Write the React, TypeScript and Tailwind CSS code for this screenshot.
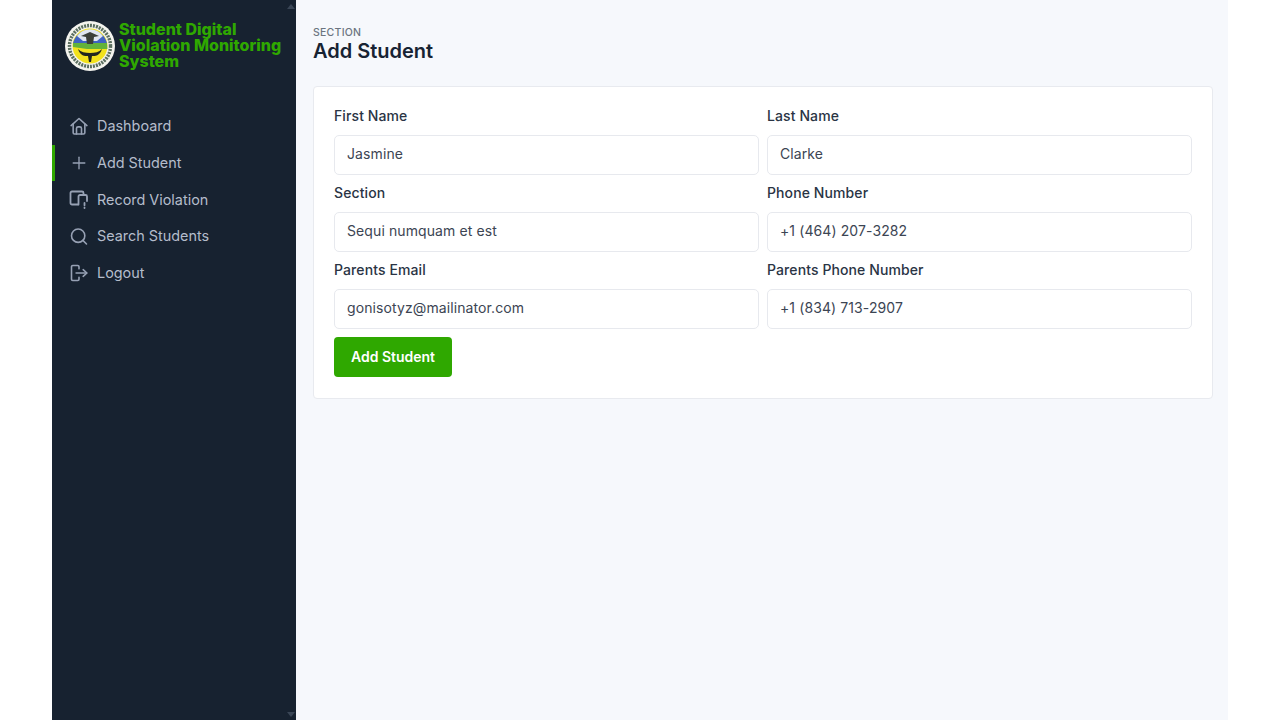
import React from 'react';
import { Plus, Search } from 'lucide-react';

const HomeIcon = () => (
    <svg width="20" height="20" viewBox="0 0 24 24" fill="none" stroke="currentColor" strokeWidth="1.9" strokeLinecap="round" strokeLinejoin="round">
        <path d="M2.5 11.5 12 3l9.5 8.5" />
        <path d="M5 9.5V20a1.5 1.5 0 0 0 1.5 1.5h11A1.5 1.5 0 0 0 19 20V9.5" />
        <path d="M9 21.5V15a2 2 0 0 1 2-2h2a2 2 0 0 1 2 2v6.5" />
    </svg>
);

const RecordIcon = () => (
    <svg width="20" height="20" viewBox="0 0 20 20" fill="none" stroke="currentColor" strokeWidth="1.8" strokeLinecap="round" strokeLinejoin="round">
        <path d="M9 15.5H3a1.5 1.5 0 0 1-1.500-1.500V4A1.500 1.500 0 0 1 3 2.500h10A1.500 1.500 0 0 1 14.500 4v2" />
        <path d="M9.500 15.500V7.500A1.500 1.500 0 0 1 11 6h5.500A1.500 1.500 0 0 1 18 7.500V12" />
        <path d="M15.500 14v2.200M15.500 18.500v.5" />
    </svg>
);

const LogoutIcon = () => (
    <svg width="20" height="20" viewBox="0 0 24 24" fill="none" stroke="currentColor" strokeWidth="1.9" strokeLinecap="round" strokeLinejoin="round">
        <path d="M12 7V4.500A1.500 1.500 0 0 0 10.500 3h-6A1.500 1.500 0 0 0 3 4.500v15A1.500 1.500 0 0 0 4.500 21h6a1.500 1.500 0 0 0 1.500-1.500V17" />
        <path d="M8.500 12H21" />
        <path d="M17 8l4.500 4-4.500 4" />
    </svg>
);

const Logo = () => (
    <svg width="50" height="50" viewBox="0 0 50 50">
        <circle cx="25" cy="25" r="25" fill="#f4f4ee" />
        <circle cx="25" cy="25" r="20.500" fill="none" stroke="#5b6f60" strokeWidth="3.500" strokeDasharray="2 1" />
        <circle cx="25" cy="25" r="17.500" fill="#f2e21c" />
        <path d="M8 22a17.500 17.500 0 0 1 34 0z" fill="#3f62c4" />
        <path d="M12 15a16 16 0 0 1 26 0l-6 5H18z" fill="#dfe6ef" />
        <path d="M8 22h34l.4 6H22L8 26z" fill="#63b23a" />
        <path d="M16 15l9-4 9 4-5 1-1 7h-6l-1-7z" fill="#3a3f38" />
        <path d="M13 28c2 7 7 7 10 7l1 6h2l1-6c3 0 8 0 10-7-3 3-7 4-12 4s-9-1-12-4z" fill="#20261f" />
    </svg>
);

const NavItem = ({ icon, label, active = false }: { icon: React.ReactNode, label: string, active?: boolean }) => (
    <div className={`flex items-center gap-2 h-[36.6px] pl-[14px] text-[#b4bccb] text-[14.4px] border-l-[3px] ${active ? 'border-[#2fa800]' : 'border-transparent'}`}>
        <span className="w-5 flex justify-center text-[#97a1b4]">{icon}</span>
        <span>{label}</span>
    </div>
);

const Field = ({ label, value }: { label: string, value: string }) => (
    <div className="flex flex-col">
        <label className="text-[14px] font-medium text-[#2a3444] leading-[20px] mb-[9px] tracking-[0.1px]">{label}</label>
        <div className="h-10 bg-white border border-[#e7e9ee] rounded-[5px] px-3 pb-[3px] flex items-center text-[14px] text-[#3c4553] tracking-[0.1px]">{value}</div>
    </div>
);

export default function App() {
    return (
        <div className="h-screen bg-white flex justify-center overflow-hidden font-['Inter',sans-serif]">
            <div className="w-[1176px] flex">
                {/* Sidebar */}
                <aside className="w-[244px] bg-[#172230] relative shrink-0">
                    <div className="flex items-center gap-[4px] pl-[13px] pt-[21px]">
                        <Logo />
                        <div className="text-[#2fa800] font-extrabold text-[16px] leading-[16px] w-[172px] -mt-[3px]">
                            Student Digital Violation Monitoring System
                        </div>
                    </div>
                    <nav className="mt-[37px]">
                        <NavItem icon={<HomeIcon />} label="Dashboard" />
                        <NavItem icon={<Plus size={24} strokeWidth={1.6} />} label="Add Student" active />
                        <NavItem icon={<RecordIcon />} label="Record Violation" />
                        <NavItem icon={<Search size={23} strokeWidth={1.9} />} label="Search Students" />
                        <NavItem icon={<LogoutIcon />} label="Logout" />
                    </nav>
                    {/* scrollbar arrows */}
                    <div className="absolute top-[4px] right-[1px] w-0 h-0 border-x-[4px] border-x-transparent border-b-[5px] border-b-[#3a4656]" />
                    <div className="absolute bottom-[3px] right-[1px] w-0 h-0 border-x-[4px] border-x-transparent border-t-[5px] border-t-[#3a4656]" />
                </aside>

                {/* Main */}
                <main className="flex-1 bg-[#f6f8fc] pl-[17px] pr-[15px] pt-[26px]">
                    <div className="text-[10.5px] font-medium text-[#6b7480] tracking-[0.25px] leading-[13px]">SECTION</div>
                    <h1 className="text-[20px] font-semibold text-[#172333] leading-[24px]">Add Student</h1>
                    <div className="mt-[23px] bg-white border border-[#e8eaef] rounded-[4px] h-[313px] px-5 pt-[19px]">
                        <div className="grid grid-cols-2 gap-x-2 gap-y-2">
                            <Field label="First Name" value="Jasmine" />
                            <Field label="Last Name" value="Clarke" />
                            <Field label="Section" value="Sequi numquam et est" />
                            <Field label="Phone Number" value="+1 (464) 207-3282" />
                            <Field label="Parents Email" value="gonisotyz@mailinator.com" />
                            <Field label="Parents Phone Number" value="+1 (834) 713-2907" />
                        </div>
                        <button className="mt-2 h-10 w-[118px] bg-[#2fa800] text-white rounded-[4px] text-[14px] font-semibold pb-[2px]">Add Student</button>
                    </div>
                </main>
            </div>
        </div>
    );
}
